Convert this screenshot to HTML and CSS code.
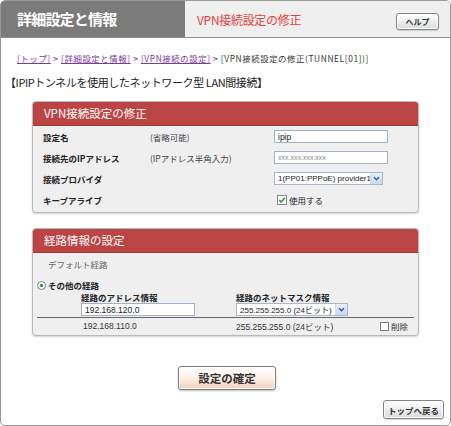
FILE: index.html
```html
<!DOCTYPE html>
<html lang="ja">
<head>
<meta charset="utf-8">
<title>VPN接続設定の修正</title>
<link rel="stylesheet" href="styles.css">
</head>
<body>
<div class="page">
  <div class="header">
    <div class="header-title">詳細設定と情報</div>
    <div class="header-sub">
      <span class="sub-title">VPN接続設定の修正</span>
      <span class="btn help-btn">ヘルプ</span>
    </div>
  </div>

  <div class="breadcrumb">
    <a href="#">[トップ]</a> &gt; <a href="#">[詳細設定と情報]</a> &gt; <a href="#">[VPN接続の設定]</a> &gt; [VPN接続設定の修正(TUNNEL[01])]
  </div>

  <div class="page-heading">【IPIPトンネルを使用したネットワーク型 LAN間接続】</div>

  <div class="panel panel-vpn">
    <div class="panel-head">VPN接続設定の修正</div>
    <div class="panel-body">
      <div class="form-row">
        <span class="lbl">設定名</span>
        <span class="hint">(省略可能)</span>
        <span class="field"><span class="input">ipip</span></span>
      </div>
      <div class="form-row">
        <span class="lbl">接続先のIPアドレス</span>
        <span class="hint">(IPアドレス半角入力)</span>
        <span class="field"><span class="input placeholder">xxx.xxx.xxx.xxx</span></span>
      </div>
      <div class="form-row">
        <span class="lbl">接続プロバイダ</span>
        <span class="hint"></span>
        <span class="field"><span class="select select-provider"><span class="select-text">1(PP01:PPPoE) provider1</span><span class="select-arrow"><svg width="9" height="9" viewBox="0 0 9 9"><path d="M2 3.2 L4.5 5.7 L7 3.2" fill="none" stroke="#3a5f9a" stroke-width="1.5"/></svg></span></span></span>
      </div>
      <div class="form-row">
        <span class="lbl">キープアライブ</span>
        <span class="hint"></span>
        <span class="field check-field"><svg class="checkbox" width="10" height="10" viewBox="0 0 10 10"><rect x="0.5" y="0.5" width="9" height="9" fill="#fff" stroke="#7a8a99"/><path d="M2.3 5 L4.2 7 L7.8 2.8" fill="none" stroke="#2f9a2f" stroke-width="1.6"/></svg>使用する</span>
      </div>
    </div>
  </div>

  <div class="panel panel-route">
    <div class="panel-head">経路情報の設定</div>
    <div class="panel-body route-body">
      <div class="default-route">デフォルト経路</div>
      <div class="radio-row"><svg class="radio" width="9" height="9" viewBox="0 0 9 9"><circle cx="4.5" cy="4.5" r="4" fill="#fff" stroke="#6f7f8f"/><circle cx="4.5" cy="4.5" r="1.7" fill="#2f9a2f"/></svg>その他の経路</div>
      <div class="route-grid">
        <span class="col-lbl">経路のアドレス情報</span>
        <span class="col-lbl">経路のネットマスク情報</span>
        <span class="input route-input">192.168.120.0</span>
        <span class="select select-mask"><span class="select-text">255.255.255.0 (24ビット)</span><span class="select-arrow"><svg width="9" height="9" viewBox="0 0 9 9"><path d="M2 3.2 L4.5 5.7 L7 3.2" fill="none" stroke="#3a5f9a" stroke-width="1.5"/></svg></span></span>
      </div>
      <div class="route-row">
        <span class="route-addr">192.168.110.0</span>
        <span class="route-mask">255.255.255.0 (24ビット)</span>
        <span class="route-del"><svg class="checkbox" width="9" height="9" viewBox="0 0 9 9"><rect x="0.5" y="0.5" width="8" height="8" fill="#fff" stroke="#6f7f8f"/></svg>削除</span>
      </div>
    </div>
  </div>

  <div class="confirm-wrap">
    <span class="btn confirm-btn">設定の確定</span>
  </div>
  <div class="back-wrap">
    <span class="btn back-btn">トップへ戻る</span>
  </div>
</div>
</body>
</html>
```

FILE: styles.css
```css
* { box-sizing: border-box; }
html, body {
  margin: 0;
  padding: 0;
  background: #ffffff;
}
body {
  font-family: "Noto Sans CJK JP", "Noto Sans", "Liberation Sans", sans-serif;
  color: #333;
}
.page {
  width: 451px;
  height: 426px;
  border: 1px solid #9a9a9a;
  border-radius: 5px;
  overflow: hidden;
  background: #fff;
}
.header {
  display: flex;
  height: 37px;
  border-bottom: 1px solid #8c8c8c;
}
.header-title {
  width: 184px;
  background: #7b7b7b;
  color: #fff;
  font-size: 15px;
  font-weight: bold;
  line-height: 36px;
  padding-left: 16px;
  letter-spacing: -0.8px;
}
.header-sub {
  flex: 1;
  display: flex;
  align-items: center;
  justify-content: space-between;
  background: #efefef;
  padding: 0 11px 0 12px;
}
.sub-title {
  color: #e5413b;
  font-size: 12px;
  letter-spacing: -0.3px;
}
.btn {
  display: inline-flex;
  align-items: center;
  justify-content: center;
  border: 1px solid #858585;
  border-radius: 3px;
  box-shadow: inset 0 0 0 1px #fff, 0 1px 1px rgba(0,0,0,0.15);
  color: #333;
  font-weight: bold;
}
.help-btn {
  width: 43px;
  height: 17px;
  font-size: 8px;
  background: linear-gradient(#ffffff, #dcdcdc);
  margin-top: 4px;
}
.breadcrumb {
  margin-top: 14px;
  padding-left: 16px;
  font-size: 8.4px;
  line-height: 12px;
  letter-spacing: 0.6px;
  color: #333;
  white-space: nowrap;
}
.breadcrumb a {
  color: #7a3aa0;
  text-decoration: underline;
}
.page-heading {
  margin-top: 10px;
  padding-left: 4px;
  font-size: 11px;
  line-height: 16px;
  color: #222;
  letter-spacing: -0.4px;
  white-space: nowrap;
}
.panel {
  margin-left: 31px;
  width: 387px;
  border: 1px solid #b9b9b9;
  border-radius: 4px;
  background: #efefef;
  box-shadow: 0 1px 2px rgba(0,0,0,0.18);
  overflow: hidden;
}
.panel-vpn { margin-top: 11px; }
.panel-route { margin-top: 15px; }
.panel-head {
  height: 24px;
  background: #bb4545;
  border-bottom: 1px solid #a53838;
  color: #fff;
  font-size: 11.5px;
  line-height: 23px;
  padding-left: 11px;
}
.panel-body {
  padding: 0 0 2px 10px;
}
.form-row {
  display: grid;
  grid-template-columns: 107px 124px 1fr;
  align-items: center;
  height: 21px;
  font-size: 8.5px;
}
.lbl {
  font-weight: bold;
  color: #222;
}
.hint {
  color: #444;
}
.field {
  display: flex;
  align-items: center;
}
.input {
  display: flex;
  align-items: center;
  width: 114px;
  height: 13px;
  border: 1px solid #9fb2c6;
  background: #fff;
  padding-left: 3px;
  font-family: "Liberation Sans", "Noto Sans CJK JP", sans-serif;
  font-size: 8.5px;
  color: #222;
}
.placeholder {
  color: #888;
  font-size: 7px;
}
.select {
  display: flex;
  align-items: center;
  height: 13px;
  border: 1px solid #a9b8c8;
  background: #fff;
  font-family: "Liberation Sans", "Noto Sans CJK JP", sans-serif;
  font-size: 8px;
  color: #222;
}
.select-text {
  flex: 1;
  padding-left: 3px;
  white-space: nowrap;
  overflow: hidden;
}
.select-arrow {
  display: flex;
  align-items: center;
  justify-content: center;
  width: 12px;
  height: 11px;
  background: linear-gradient(#e6eefa, #c9d8ee);
  border-left: 1px solid #d3dce8;
}
.select-provider { width: 109px; }
.check-field {
  padding-left: 3px;
  font-size: 8.5px;
  color: #222;
}
.checkbox { margin-right: 2px; }
.route-body {
  padding: 0;
  height: 82px;
}
.default-route {
  height: 22px;
  line-height: 22px;
  padding-left: 15px;
  font-size: 8.5px;
  color: #666;
}
.radio-row {
  margin-top: 4px;
  height: 12px;
  display: flex;
  align-items: center;
  padding-left: 4px;
  font-size: 8.5px;
  font-weight: bold;
  color: #222;
}
.radio { margin-right: 2px; }
.route-grid {
  display: grid;
  grid-template-columns: 155px 1fr;
  grid-template-rows: 12px 13px;
  padding-left: 44px;
  margin: 0 4px;
  border-bottom: 1px solid #666;
  padding-bottom: 1px;
  font-size: 8.5px;
}
.col-lbl {
  font-weight: bold;
  color: #222;
  line-height: 12px;
  white-space: nowrap;
}
.route-input { width: 114px; }
.select-mask { width: 112px; }
.route-row {
  display: flex;
  align-items: center;
  height: 16px;
  margin: 0 4px;
  font-family: "Liberation Sans", "Noto Sans CJK JP", sans-serif;
  font-size: 8.5px;
  color: #333;
}
.route-addr { width: 199px; padding-left: 46px; }
.route-mask { width: 144px; }
.route-del {
  display: flex;
  align-items: center;
  font-family: "Noto Sans CJK JP", sans-serif;
}
.confirm-wrap {
  display: flex;
  justify-content: center;
  margin-top: 30px;
  padding-left: 3px;
}
.confirm-btn {
  width: 98px;
  height: 24px;
  font-size: 11.5px;
  color: #333;
  border: 1px solid #7d7d7d;
  border-radius: 3px;
  background: linear-gradient(#ffffff 0%, #fdf1ea 45%, #f3d2bf 100%);
  box-shadow: inset 0 0 0 1px #fff, 0 1px 2px rgba(0,0,0,0.25);
}
.back-wrap {
  display: flex;
  justify-content: flex-end;
  margin-top: 10px;
  padding-right: 6px;
}
.back-btn {
  width: 61px;
  height: 19px;
  font-size: 8.5px;
  background: linear-gradient(#ffffff, #dcdcdc);
}
```
